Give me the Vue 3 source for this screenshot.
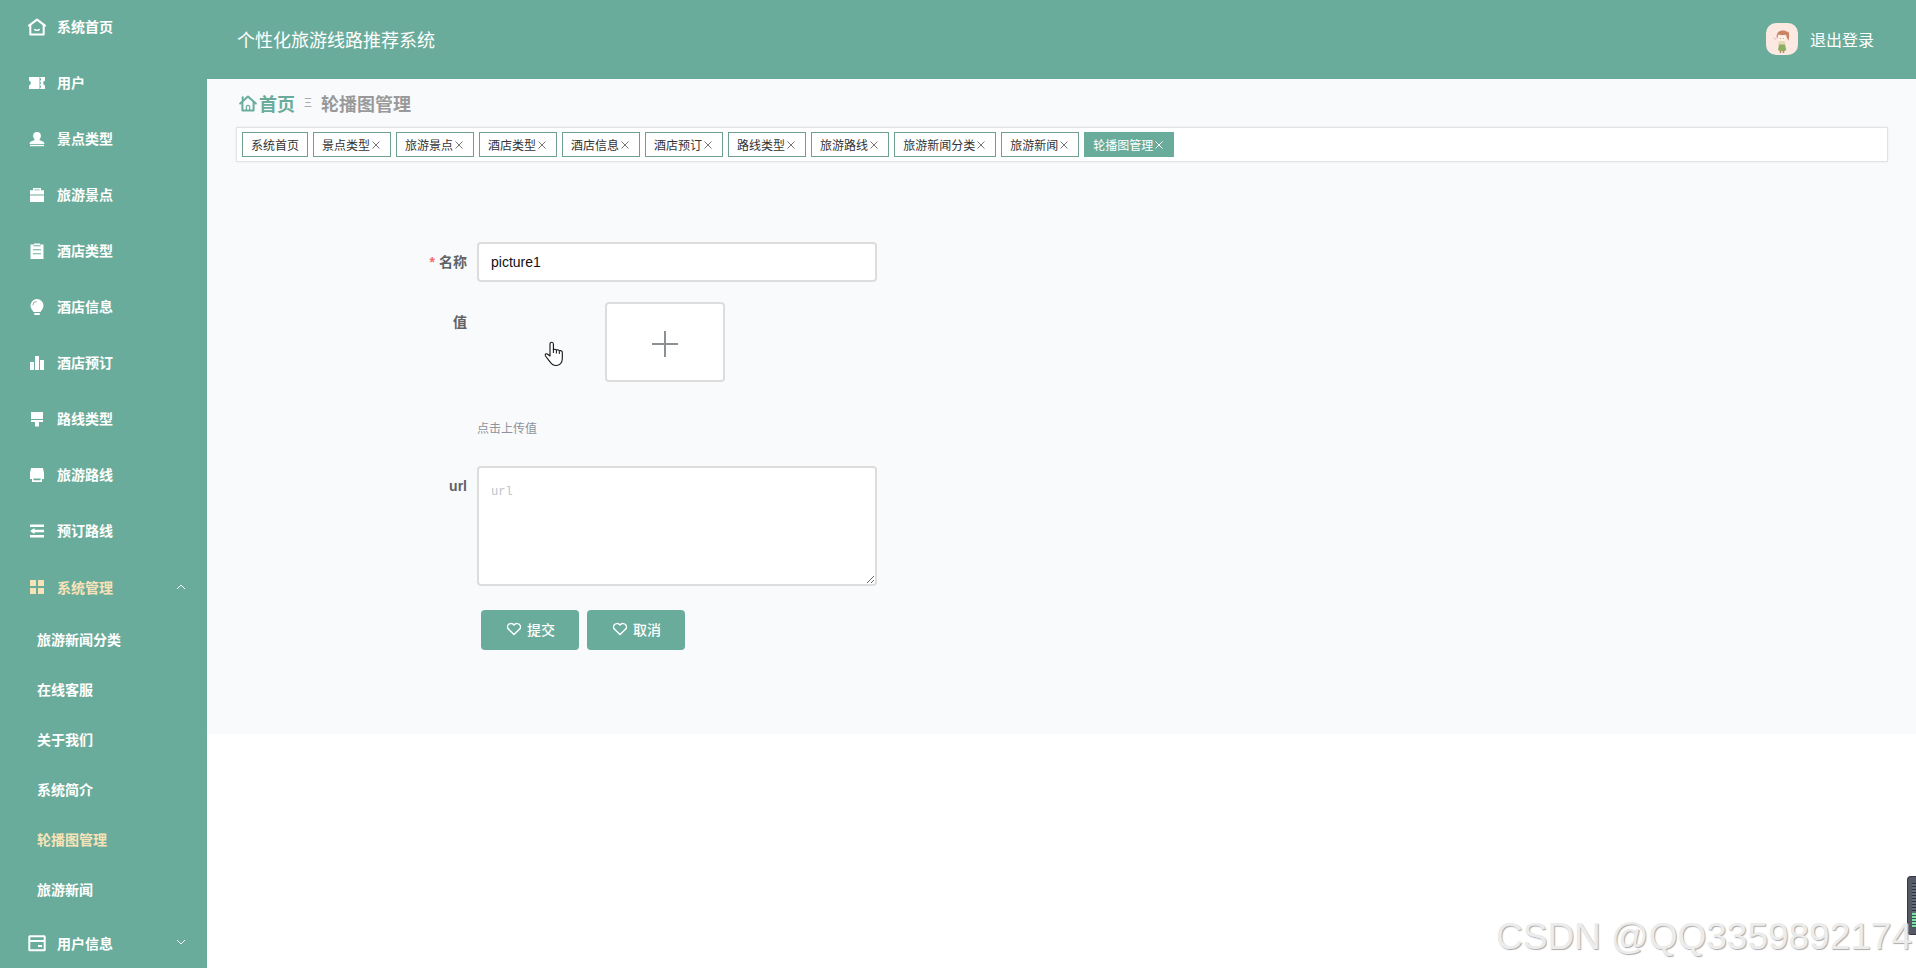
<script setup>
import { ref } from 'vue'

const menu = [
  { icon: 'home', label: '系统首页' },
  { icon: 'ticket', label: '用户' },
  { icon: 'stamp', label: '景点类型' },
  { icon: 'case', label: '旅游景点' },
  { icon: 'clipboard', label: '酒店类型' },
  { icon: 'bulb', label: '酒店信息' },
  { icon: 'chart', label: '酒店预订' },
  { icon: 'brush', label: '路线类型' },
  { icon: 'printer', label: '旅游路线' },
  { icon: 'fold', label: '预订路线' },
  {
    icon: 'grid',
    label: '系统管理',
    active: true,
    arrow: 'up',
    children: ['旅游新闻分类', '在线客服', '关于我们', '系统简介', '轮播图管理', '旅游新闻'],
  },
  { icon: 'card', label: '用户信息', arrow: 'down' },
]

const tabs = [
  '系统首页', '景点类型', '旅游景点', '酒店类型', '酒店信息', '酒店预订',
  '路线类型', '旅游路线', '旅游新闻分类', '旅游新闻', '轮播图管理',
]

const current = '轮播图管理'
const name = ref('picture1')
const url = ref('')
</script>

<template>
  <div class="layout">
    <nav class="sidebar">
      <ul class="menu">
        <li v-for="item in menu" :key="item.label">
          <a href="#" class="item" :class="{ active: item.active }">
            <svg class="icon" viewBox="0 0 18 18" aria-hidden="true">
              <g v-if="item.icon === 'home'" fill="none" stroke="currentColor" stroke-width="2" stroke-linejoin="round" stroke-linecap="round">
                <path d="M2.3 6.8V16.6H15.7V6.8" /><path d="M1 7.6 9 1.6l8 6" /><path d="M6.8 11.6q2.2 1.4 4.4 0" stroke-width="1.6" />
              </g>
              <g v-else-if="item.icon === 'ticket'" fill="currentColor">
                <path d="M1 3H11.500V15H1V11.500a2.600 2.600 0 0 0 0-5Z" /><path d="M12.200 3h4.800v3.500a2.600 2.600 0 0 0 0 5V15h-4.800v-1.600h.8v-1.600h-.8v-2h.8V8.200h-.8v-2h.8V4.600h-.8Z" />
              </g>
              <g v-else-if="item.icon === 'stamp'" fill="currentColor">
                <path d="M9 2a3.900 3.900 0 0 1 3.900 3.900c0 1.700-1.400 2.600-1.400 4.100 0 .9 4.900.7 4.900 3.900H1.600c0-3.200 4.900-3 4.900-3.900 0-1.500-1.400-2.400-1.400-4.100A3.900 3.900 0 0 1 9 2Z" /><rect x="2" y="14.800" width="14" height="1.400" />
              </g>
              <g v-else-if="item.icon === 'case'" fill="currentColor">
                <path d="M5 4.200V2h8v2.200h3V8.500H2V4.200Zm1.500 0h5V3.400h-5Z" fill-rule="evenodd" /><rect x="2" y="9.500" width="14" height="6.500" />
              </g>
              <path v-else-if="item.icon === 'clipboard'" fill="currentColor" fill-rule="evenodd" d="M2.500 2.500H6V1.500h6v1h3.500V17h-13ZM5.500 3.200v1h7v-1ZM5 7.200v1h8v-1ZM5 11.200v1h8v-1Z" />
              <g v-else-if="item.icon === 'bulb'">
                <path fill="currentColor" d="M9 1a6.500 6.500 0 0 1 6.500 6.500c0 3-1.800 4.200-3 6.500h-7c-1.200-2.300-3-3.500-3-6.500A6.500 6.500 0 0 1 9 1Z" /><rect x="6" y="15" width="6" height="2" rx="1" fill="currentColor" />
                <path d="M4.800 7.300A4.200 4.200 0 0 1 8.500 3.400" fill="none" stroke="#6aac9b" stroke-width=".9" />
              </g>
              <path v-else-if="item.icon === 'chart'" fill="currentColor" d="M2 8h4v8H2ZM7 2h4v14H7ZM12 6h4v10h-4Z" />
              <path v-else-if="item.icon === 'brush'" fill="currentColor" d="M3 2h12v7H3ZM3 10h12v2h-4v4.500H7V12H3Z" />
              <path v-else-if="item.icon === 'printer'" fill="currentColor" fill-rule="evenodd" d="M3 2h12l.5 3 .5 1v7h-2v3H4v-3H2V6l.500-1ZM5.400 12.600v1.600h7.200v-1.600Z" />
              <path v-else-if="item.icon === 'fold'" fill="currentColor" d="M2 2.500h14v2.400H2ZM6.500 7.800h9.500v2.400H6.500ZM2 13.100h14v2.400H2ZM2 9l4.500-3v6Z" />
              <path v-else-if="item.icon === 'grid'" fill="currentColor" d="M2 2h6v6H2ZM10 2h6v6h-6ZM2 10h6v6H2ZM10 10h6v6h-6Z" />
              <g v-else fill="none" stroke="currentColor" stroke-width="2">
                <rect x="1.300" y="2.300" width="15.400" height="14" rx=".5" /><path d="M1.300 7h15.400M10 12h4" />
              </g>
            </svg>
            <span :class="{ leaf: !item.arrow }">{{ item.label }}</span>
            <svg v-if="item.arrow" class="arrow" viewBox="0 0 12 12" aria-hidden="true">
              <path :d="item.arrow === 'up' ? 'M2 8l4-4 4 4' : 'M2 3l4 4 4-4'" fill="none" stroke="currentColor" stroke-width="1" />
            </svg>
          </a>
          <ul v-if="item.children" class="submenu">
            <li v-for="child in item.children" :key="child">
              <a href="#" class="subitem" :class="{ active: child === current }">{{ child }}</a>
            </li>
          </ul>
        </li>
      </ul>
    </nav>

    <div class="page">
      <header class="header">
        <h1 class="title">个性化旅游线路推荐系统</h1>
        <div class="account">
          <svg class="avatar" viewBox="0 0 32 32" role="img" aria-label="头像">
            <rect width="32" height="32" fill="#fbe9e2" />
            <path d="M11 16c-1.500-6 2-8.500 6-8.500 1.600 0 3 .4 3.700 1.200 2.600-.7 3 3.500 1.800 9l-1.600-3-1-3c-3 .8-5.800.6-7.400-.5Z" fill="#c98463" />
            <path d="M12.500 12c2 .8 5 .7 6.600 0l.2 3.500c0 2-1.300 3-3.300 3s-3.500-1-3.500-3Z" fill="#fff3e8" />
            <path d="M12.500 18.500c1-1 5.500-1 6.500 0l.5 3.500h-7.300Z" fill="#e8d8b9" />
            <path d="M13 21.500h6l1.300 5.500c-2 1.600-6 1.600-8.300 0Z" fill="#8caf62" />
            <path d="M14.500 27.500v2.500M17.500 27.500v2.500" stroke="#b98f68" stroke-width="1.500" />
            <path d="M8 14.500l1.500 2" stroke="#dcb4a0" />
            <path d="M14.300 15v.8M17.300 15v.8" stroke="#986a55" stroke-width=".8" />
          </svg>
          <a href="#" class="logout">退出登录</a>
        </div>
      </header>

      <main class="content">
        <div class="crumbs">
          <a href="#" class="crumb-home">
            <svg class="crumb-icon" viewBox="0 0 18 18" aria-hidden="true">
              <g fill="none" stroke="currentColor" stroke-width="2" stroke-linejoin="round" stroke-linecap="round">
                <path d="M1.200 9.500 9 2.500l7.800 7" /><path d="M3.400 8.500v8h11.200v-8" /><path d="M7.300 16.500v-3.400a1.700 1.700 0 0 1 3.400 0v3.400" stroke-width="1.200" /><path d="M3.700 6V3.200" />
              </g>
            </svg>首页</a>
          <span class="crumb-sep">Ξ</span>
          <span class="crumb-current">{{ current }}</span>
        </div>

        <div class="tabs">
          <button v-for="(tab, i) in tabs" :key="tab" type="button" class="tab" :class="{ on: tab === current }">
            {{ tab }}<svg v-if="i > 0" class="close" viewBox="0 0 12 12" aria-hidden="true">
              <path d="M2.500 2.500l7 7M9.500 2.500l-7 7" stroke="currentColor" stroke-width="1" />
            </svg>
          </button>
        </div>

        <form class="form" @submit.prevent>
          <div class="row">
            <label class="label required" for="name">名称</label>
            <input id="name" v-model="name" class="input" type="text">
          </div>
          <div class="row">
            <label class="label" for="upload">值</label>
            <div class="upload">
              <div class="upload-list">
                <div class="thumb">
                  <svg class="pointer" viewBox="0 0 20 26" aria-hidden="true">
                    <path d="M6 15V3.200c0-2.600 3.400-2.600 3.400 0V9c.5-1.200 2.800-1 3 .4.800-1.200 2.700-.7 2.900.7 1-.9 3-.3 3 1.400v6c0 4.200-2.600 7-6.300 7-3 0-4.700-1.500-6-3.700L1.500 15c-1-1.600.7-3 2.200-1.800Z" fill="#fff" stroke="#111" stroke-width="1.100" stroke-linejoin="round" />
                    <path d="M9.400 8.500V12M12.400 9.500v3M15.300 10.500v2.500" stroke="#111" stroke-width="1" />
                  </svg>
                </div>
                <button id="upload" type="button" class="picker" aria-label="上传">
                  <svg class="plus" viewBox="0 0 28 28" aria-hidden="true">
                    <path d="M14 1v26M1 14h26" stroke="currentColor" stroke-width="2" />
                  </svg>
                </button>
              </div>
              <p class="hint">点击上传值</p>
            </div>
          </div>
          <div class="row">
            <label class="label" for="url">url</label>
            <textarea id="url" v-model="url" class="textarea" placeholder="url"></textarea>
          </div>
          <div class="actions">
            <button v-for="text in ['提交', '取消']" :key="text" :type="text === '提交' ? 'submit' : 'button'" class="btn">
              <svg class="heart" viewBox="0 0 14 14" aria-hidden="true">
                <path d="M7 12.600 1.800 7.400A3.200 3.200 0 0 1 3.800 1.600C5.200 1.400 6.300 2.100 7 3.100 7.700 2.100 8.800 1.400 10.200 1.600A3.200 3.200 0 0 1 12.200 7.400Z" fill="none" stroke="currentColor" stroke-width="1.400" stroke-linejoin="round" />
              </svg>{{ text }}
            </button>
          </div>
        </form>
      </main>
    </div>

    <div class="meter"><div class="meter-idle"></div><div class="meter-live"></div></div>
    <div class="watermark">CSDN @QQ3359892174</div>
  </div>
</template>

<style>
body {
  margin: 0;
  background: #fff;
}
</style>

<style scoped>
.layout {
  position: relative;
  display: flex;
  height: 100vh;
  overflow: hidden;
  font-family: "Liberation Sans", "Noto Sans CJK SC", sans-serif;
  font-size: 14px;
  color: #333;
}
.layout * {
  box-sizing: border-box;
}
a {
  color: inherit;
  text-decoration: none;
}
button {
  font-family: inherit;
  cursor: pointer;
}
.sidebar {
  flex: none;
  width: 207px;
  overflow: hidden;
  background: #6aac9b;
  color: #fff;
  font-weight: 700;
}
.menu,
.submenu {
  margin: 0;
  padding: 0;
  list-style: none;
}
.item {
  display: flex;
  align-items: center;
  gap: 11px;
  height: 56px;
  padding: 0 20px 2px 28px;
}
.leaf {
  padding-bottom: 2px;
}
.icon {
  width: 18px;
  height: 18px;
}
.arrow {
  width: 12px;
  height: 12px;
  margin-left: auto;
  color: #fff;
}
.subitem {
  display: flex;
  align-items: center;
  height: 50px;
  padding: 0 20px 4px 37px;
}
.active {
  color: #f8e3b8;
}
.page {
  flex: 1;
  min-width: 0;
}
.header {
  display: flex;
  align-items: center;
  justify-content: space-between;
  height: 79px;
  padding: 0 42px 2px 30px;
  background: #6aac9b;
  color: #fff;
}
.title {
  margin: 0;
  font-size: 18px;
  font-weight: 400;
}
.account {
  display: flex;
  align-items: center;
  gap: 12px;
  font-size: 16px;
}
.avatar {
  width: 32px;
  height: 32px;
  border-radius: 10px;
}
.content {
  padding: 12px 28px 84px 29px;
  background: #f9fafc;
}
.crumbs {
  display: flex;
  align-items: center;
  height: 26px;
  padding: 0 0 2px 3px;
  margin-bottom: 10px;
  font-size: 18px;
  font-weight: 700;
}
.crumb-home {
  display: flex;
  align-items: center;
  gap: 2px;
  color: #6aac9b;
}
.crumb-icon {
  width: 18px;
  height: 18px;
}
.crumb-sep {
  width: 26px;
  text-align: center;
  font-size: 12px;
  font-weight: 400;
  color: #aaa;
}
.crumb-current {
  color: #999;
}
.tabs {
  display: flex;
  gap: 5px;
  padding: 4px 5px;
  border: 1px solid #dfe2e6;
  background: #fff;
  box-shadow: 0 0 3px rgba(0, 0, 0, 0.06);
}
.tab {
  display: flex;
  align-items: center;
  height: 25px;
  padding: 0 8px;
  border: 1px solid #6f9f91;
  background: #fff;
  color: #333;
  font-size: 12px;
  white-space: nowrap;
}
.close {
  width: 12px;
  height: 12px;
  color: #777;
}
.on {
  border-color: #6aac9b;
  background: #6aac9b;
  color: #fff;
}
.on .close {
  color: #fff;
}
.form {
  padding: 80px 0 0 91px;
}
.row {
  display: flex;
  margin-bottom: 20px;
}
.label {
  flex: none;
  width: 150px;
  padding-right: 10px;
  line-height: 40px;
  text-align: right;
  font-weight: 700;
  color: #606266;
}
.required::before {
  content: "*";
  margin-right: 4px;
  color: #f56c6c;
}
.input,
.textarea {
  width: 400px;
  border: 2px solid #ddd;
  border-radius: 4px;
  background: #fff;
  color: #111;
  outline: none;
}
.input {
  height: 40px;
  padding: 0 12px;
  font-family: inherit;
  font-size: 14px;
}
.textarea {
  height: 120px;
  padding: 15px 12px;
  font-family: "Liberation Mono", monospace;
  font-size: 12px;
  line-height: 18px;
  resize: both;
}
.textarea::placeholder {
  color: #c0c4cc;
}
.upload-list {
  display: flex;
  gap: 10px;
}
.thumb {
  position: relative;
  width: 118px;
  height: 80px;
}
.pointer {
  position: absolute;
  left: 67px;
  top: 39px;
  width: 20px;
  height: 26px;
}
.picker {
  display: flex;
  align-items: center;
  justify-content: center;
  width: 120px;
  height: 80px;
  padding: 4px 0 0;
  border: 2px solid #ddd;
  border-radius: 4px;
  background: #fff;
  color: #8c8f94;
}
.plus {
  width: 28px;
  height: 28px;
}
.hint {
  margin: 37px 0 7px;
  font-size: 12px;
  line-height: 20px;
  color: #8c939d;
}
.actions {
  display: flex;
  gap: 8px;
  padding: 4px 0 0 154px;
}
.btn {
  display: flex;
  align-items: center;
  justify-content: center;
  gap: 6px;
  width: 98px;
  height: 40px;
  padding: 0 0 2px 2px;
  border: 0;
  border-radius: 4px;
  background: #6aac9b;
  color: #fff;
  font-size: 14px;
  font-weight: 500;
}
.heart {
  width: 14px;
  height: 14px;
}
.meter {
  position: absolute;
  right: 0;
  bottom: 33px;
  width: 9px;
  padding: 6px 0 6px 4px;
  border: 1px solid #343844;
  border-right: 0;
  border-radius: 4px 0 0 4px;
  background: #555966;
}
.meter-idle {
  height: 30px;
  background: repeating-linear-gradient(#2e323e 0 1px, #666a78 1px 3px);
}
.meter-live {
  height: 15px;
  background: repeating-linear-gradient(#7fe0a8 0 2px, #3e5550 2px 3px);
}
.watermark {
  position: absolute;
  right: 4px;
  bottom: 10px;
  font-size: 37px;
  line-height: 42px;
  white-space: nowrap;
  color: #ececec;
  text-shadow: 1px 1px 1px #aaa;
  pointer-events: none;
}
</style>
